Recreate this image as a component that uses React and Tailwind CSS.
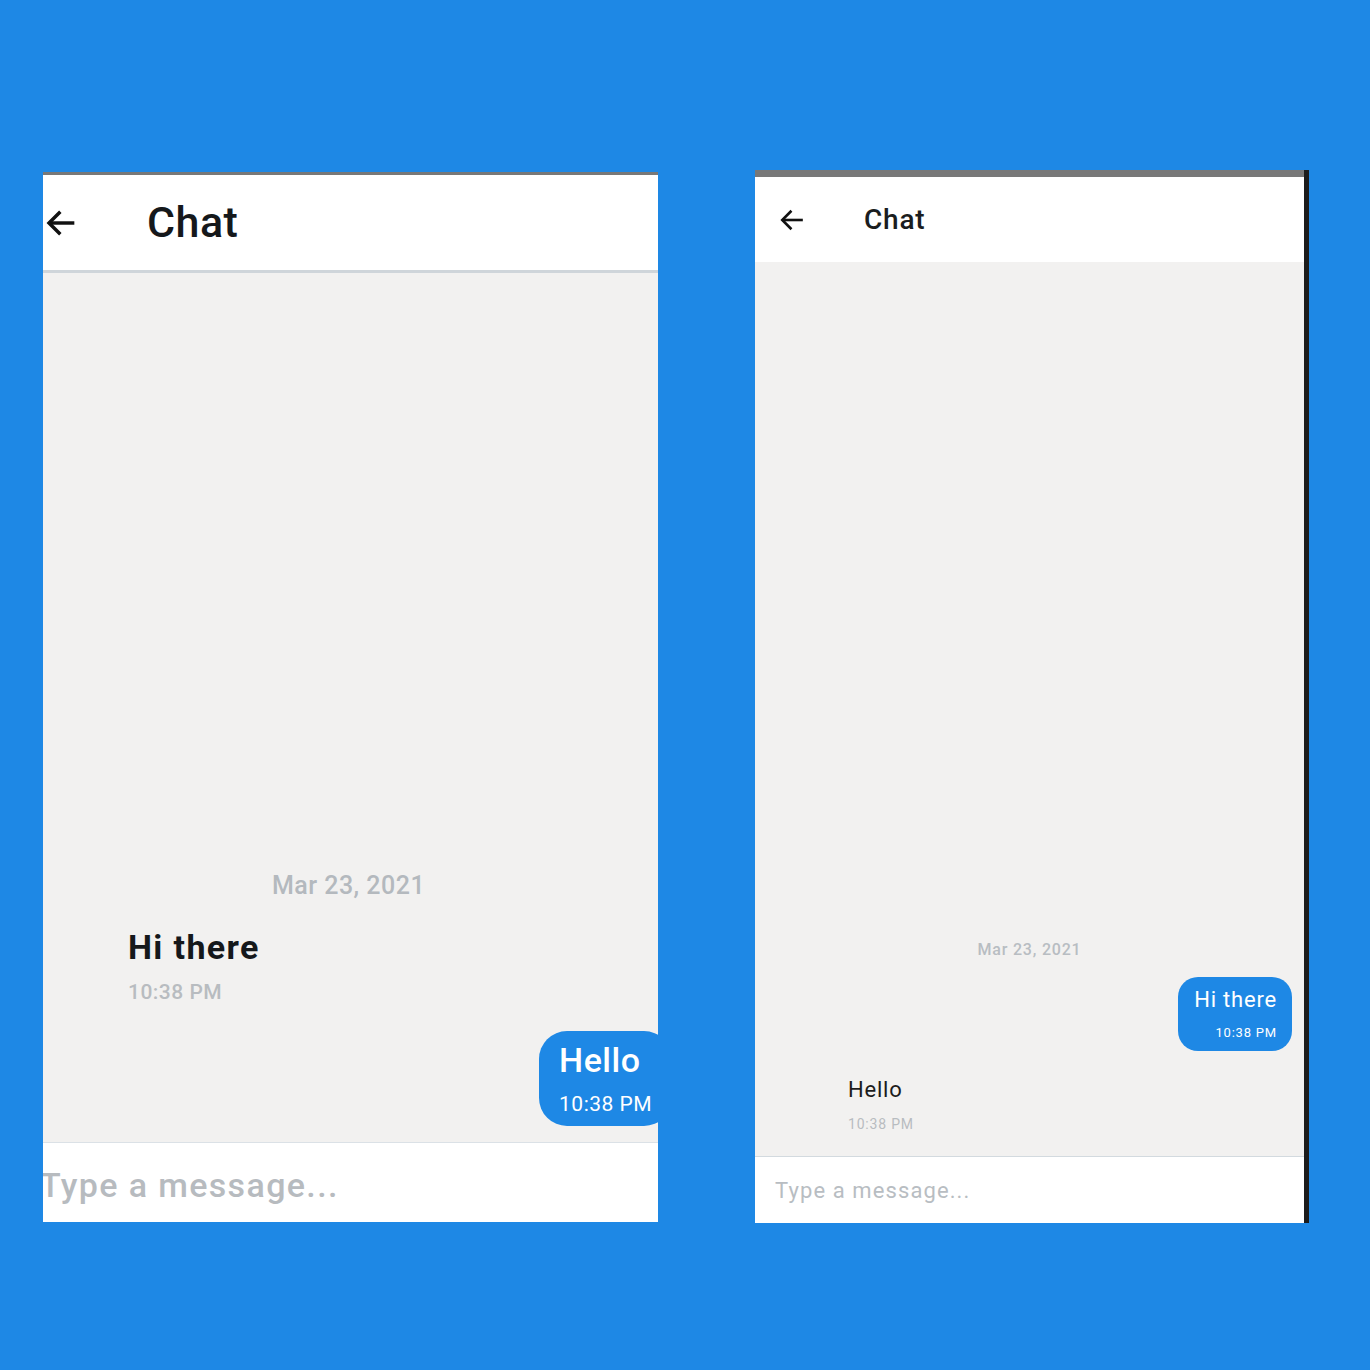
import React from "react";

function BackArrow({ size = 32, stroke = 3 }) {
  return (
    <svg width={size} height={size} viewBox="0 0 24 24" fill="none" stroke="#111" strokeWidth={stroke} strokeLinecap="butt" strokeLinejoin="miter">
      <path d="M22 12H3" />
      <path d="M11.5 3.5 3 12l8.5 8.5" />
    </svg>
  );
}

export default function App() {
  return (
    <div className="w-[1370px] h-[1370px] bg-[#1e88e5] flex items-start pt-[170px] pl-[43px] gap-[97px]" style={{ fontFamily: "Roboto, 'Noto Sans', sans-serif" }}>
      {/* Left panel */}
      <div className="mt-[2px] w-[615px] h-[1050px] flex flex-col overflow-hidden bg-white tracking-[0.03em]">
        <div className="h-[3px] bg-[#787878]" />
        <div className="h-[95px] bg-white flex items-center">
          <div className="ml-[2px] w-[32px] flex items-center">
            <BackArrow size={32} stroke={2.6} />
          </div>
          <div className="ml-[70px] text-[43px] font-medium text-[#15181b] leading-none">Chat</div>
        </div>
        <div className="h-[3px] bg-[#cfd5da]" />
        <div className="flex-1 bg-[#f2f1f0] flex flex-col justify-end pb-[16px]">
          <div className="text-center text-[25px] leading-[28px] font-medium text-[#b4b9be] pr-[4px]">Mar 23, 2021</div>
          <div className="mt-[28px] ml-[85px] text-[34px] leading-[38px] font-bold text-[#15181b] tracking-[0.04em]">Hi there</div>
          <div className="mt-[14px] ml-[85px] text-[21px] leading-[24px] font-medium text-[#b8bcc0]">10:38 PM</div>
          <div className="mt-[27px] self-end mr-[-14px] bg-[#1e88e5] rounded-[28px] pl-[20px] pr-[20px] pt-[10px] pb-[10px]">
            <div className="text-[34px] leading-[38px] font-medium text-white">Hello</div>
            <div className="mt-[13px] text-[21px] leading-[24px] text-white">10:38 PM</div>
          </div>
        </div>
        <div className="h-px bg-[#dbe1e6]" />
        <div className="h-[79px] bg-white flex items-center pt-[5px]">
          <div className="ml-[-3px] text-[34px] font-medium text-[#b7bbbf] tracking-[0.04em]">Type a message...</div>
        </div>
      </div>

      {/* Right panel */}
      <div className="w-[554px] h-[1053px] flex overflow-hidden tracking-[0.05em]">
        <div className="flex-1 flex flex-col bg-white">
          <div className="h-[7px] bg-[#787878]" />
          <div className="h-[85px] bg-white flex items-center">
            <div className="ml-[24px] w-[26px] flex items-center">
              <BackArrow size={26} stroke={2.4} />
            </div>
            <div className="ml-[59px] text-[28px] font-medium text-[#1a1d20] leading-none">Chat</div>
          </div>
          <div className="flex-1 bg-[#f2f1f0] flex flex-col justify-end pb-[24px]">
            <div className="text-center text-[16px] leading-[20px] font-medium text-[#b8bdc2]">Mar 23, 2021</div>
            <div className="mt-[17px] self-end mr-[12px] bg-[#1e88e5] rounded-[20px] pl-[16px] pr-[15px] pt-[10px] pb-[10px] flex flex-col items-end">
              <div className="self-start text-[22px] leading-[26px] text-white">Hi there</div>
              <div className="mt-[12px] text-[13px] leading-[16px] text-white">10:38 PM</div>
            </div>
            <div className="mt-[26px] ml-[93px] text-[22px] leading-[26px] text-[#1c1c1c]">Hello</div>
            <div className="mt-[13px] ml-[93px] text-[14px] leading-[16px] text-[#b8bcc0]">10:38 PM</div>
          </div>
          <div className="h-px bg-[#d3dadf]" />
          <div className="h-[66px] bg-white flex items-center">
            <div className="ml-[20px] text-[22px] text-[#b8bdc2] tracking-[0.05em]">Type a message...</div>
          </div>
        </div>
        <div className="w-[5px] bg-[#1c1c1c]" />
      </div>
    </div>
  );
}
